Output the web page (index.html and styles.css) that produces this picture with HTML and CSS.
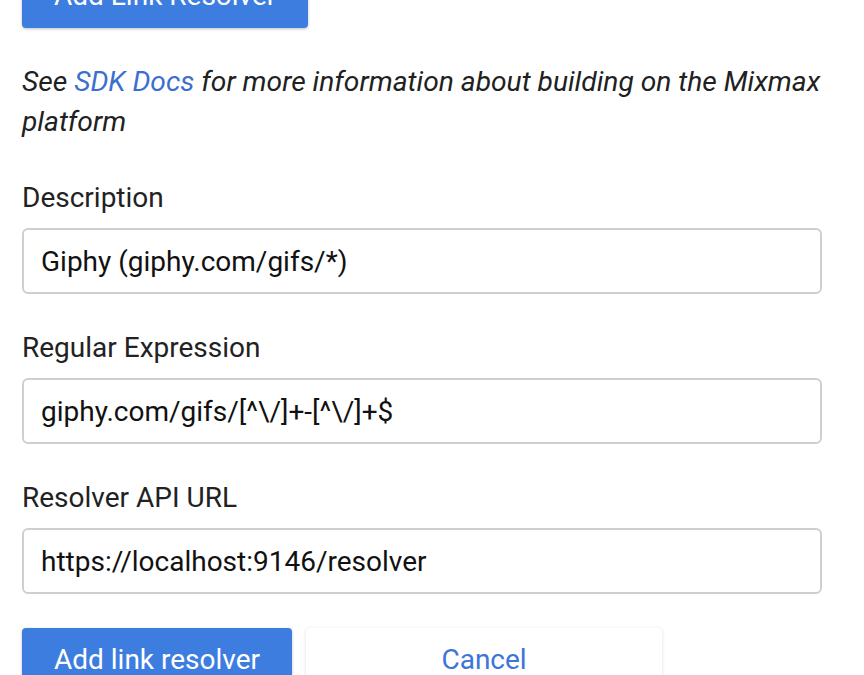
FILE: index.html
```html
<!DOCTYPE html>
<html lang="en">

<head>
    <meta charset="utf-8">
    <meta name="viewport" content="width=device-width, initial-scale=1.0">
    <title>Link Resolvers</title>
    <link rel="stylesheet" href="styles.css">
</head>

<body>
    <main class="panel">
        <button class="knap knap-blaa knap-top">Add Link Resolver</button>

        <p class="hint">See <a href="#">SDK Docs</a> for more information about building on the Mixmax platform</p>

        <form class="resolver-form">
            <div class="felt">
                <label for="description">Description</label>
                <input id="description" type="text" value="Giphy (giphy.com/gifs/*)">
            </div>
            <div class="felt">
                <label for="regex">Regular Expression</label>
                <input id="regex" type="text" value="giphy.com/gifs/[^\/]+-[^\/]+$">
            </div>
            <div class="felt">
                <label for="url">Resolver API URL</label>
                <input id="url" type="text" value="https://localhost:9146/resolver">
            </div>

            <div class="knapper">
                <button type="button" class="knap knap-blaa">Add link resolver</button>
                <button type="button" class="knap knap-hvid">Cancel</button>
            </div>
        </form>
    </main>
</body></html>
```

FILE: styles.css
```css
* {
    margin: 0px;
    box-sizing: border-box;
}

body {
    background-color: white;
    font-family: Roboto, "Liberation Sans", sans-serif;
    color: #212121;
    font-size: 28px;
    line-height: 40px;
}

.panel {
    width: 822px;
    padding-left: 22px;
}

.knap {
    font-family: Roboto, "Liberation Sans", sans-serif;
    font-size: 28px;
    line-height: 40px;
    border: none;
    border-radius: 4px;
    padding: 12px 32px;
    cursor: pointer;
}

.knap-blaa {
    background-color: #3d7ddf;
    color: white;
    box-shadow: 0 1px 3px rgba(0, 0, 0, 0.25);
}

.knap-hvid {
    background-color: white;
    color: #3d75d8;
    width: 356px;
    box-shadow: 0 1px 4px rgba(0, 0, 0, 0.12);
}

.knap-top {
    display: block;
    margin-top: -36px;
}

.hint {
    font-style: italic;
    font-size: 28.2px;
    margin-top: 34px;
}

.hint a {
    color: #3b6fcf;
    text-decoration: none;
}

.resolver-form {
    margin-top: 36px;
}

.felt {
    display: flex;
    flex-direction: column;
    gap: 10px;
    margin-bottom: 34px;
}

.felt label {
    color: #222;
}

.felt input {
    font-family: Roboto, "Liberation Sans", sans-serif;
    font-size: 28px;
    color: #111;
    height: 66px;
    padding: 0 17px;
    border: 2px solid #cfcfcf;
    border-radius: 6px;
}

.knapper {
    display: flex;
    gap: 14px;
}
```
